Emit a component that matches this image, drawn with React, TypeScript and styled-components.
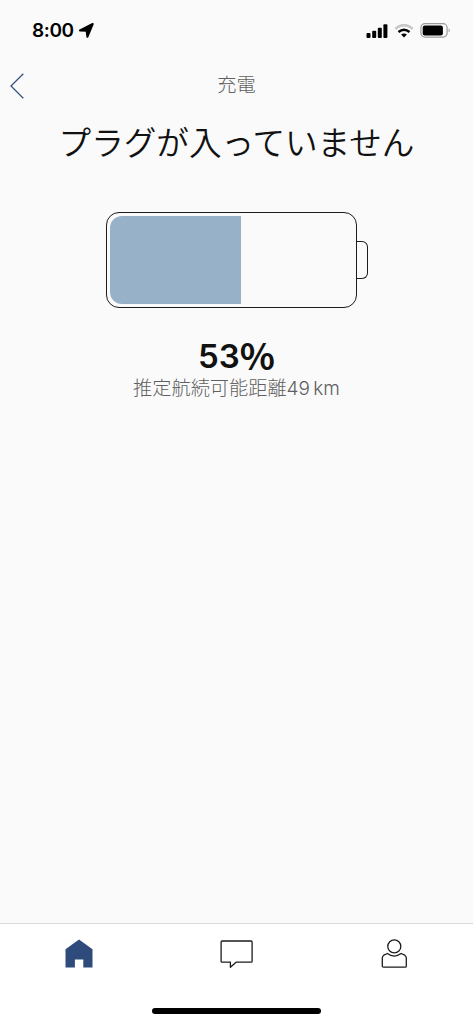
import React from 'react';
import styled, { createGlobalStyle } from 'styled-components';

const GlobalStyle = createGlobalStyle`
  * { box-sizing: border-box; }
  body { margin: 0; background: #fafafa; }
`;

const Screen = styled.div`
  display: flex;
  flex-direction: column;
  width: 100%;
  height: 1024px;
  background: #fafafa;
  color: #111;
  font-family: Inter, 'Noto Sans CJK JP', sans-serif;
  white-space: nowrap;
  overflow: hidden;
`;

const StatusBar = styled.header`
  display: flex;
  align-items: center;
  justify-content: space-between;
  height: 61px;
  padding: 0 22px 0 32px;
  color: #000;
`;

const StatusGroup = styled.div<{ $gap: number }>`
  display: flex;
  align-items: center;
  gap: ${({ $gap }) => $gap}px;
`;

const Time = styled.span`
  font-size: 19px;
  font-weight: 600;
  line-height: 24px;
  letter-spacing: -0.4px;
`;

const NavBar = styled.nav`
  display: grid;
  grid-template-columns: 60px 1fr 60px;
  align-items: center;
  height: 48px;
`;

const BackButton = styled.button`
  display: flex;
  padding: 1px 0 0 9px;
  border: 0;
  background: none;
`;

const NavTitle = styled.h1`
  margin: 0;
  font-size: 19.2px;
  font-weight: 300;
  line-height: 28px;
  color: #606060;
  text-align: center;
`;

const Content = styled.main`
  flex: 1;
  display: flex;
  flex-direction: column;
  align-items: center;
`;

const Headline = styled.h2`
  margin: 10px 0 0;
  font-size: 32.6px;
  font-weight: 350;
  line-height: 48px;
`;

const Battery = styled.div`
  display: flex;
  align-items: center;
  margin-top: 45px;
`;

const BatteryBody = styled.div`
  width: 251px;
  height: 96px;
  padding: 3px 3.5px;
  border: 1.3px solid #1c1c1c;
  border-radius: 13px;
`;

const BatteryFill = styled.div<{ $level: number }>`
  width: ${({ $level }) => $level}%;
  height: 100%;
  border-radius: 12px 0 0 12px;
  background: #97b1c8;
`;

const BatteryTip = styled.div`
  width: 11px;
  height: 38px;
  border: 1.3px solid #1c1c1c;
  border-left: 0;
  border-radius: 0 6px 6px 0;
`;

const Percent = styled.div`
  display: flex;
  align-items: center;
  height: 34px;
  margin-top: 31px;
  font-size: 33px;
  font-weight: 600;
  line-height: 34px;
`;

const PercentSign = styled.span`
  margin-top: -3px;
  font-family: 'Noto Sans CJK JP', sans-serif;
  font-size: 36.5px;
  font-weight: 700;
`;

const Range = styled.p`
  margin: 2px 0 0;
  font-size: 19.2px;
  font-weight: 300;
  line-height: 26px;
  color: #606060;
`;

const Distance = styled.span`
  font-size: 19px;
  word-spacing: -2px;
`;

const TabBar = styled.footer`
  display: flex;
  flex-direction: column;
  align-items: center;
  height: 101px;
  border-top: 1px solid #dadada;
  background: #fff;
`;

const Tabs = styled.div`
  display: grid;
  grid-template-columns: repeat(3, 1fr);
  width: 100%;
  height: 84px;
`;

const Tab = styled.button`
  display: flex;
  justify-content: center;
  padding: 14px 0 0;
  border: 0;
  background: none;
`;

const HomeIndicator = styled.div`
  width: 169px;
  height: 6px;
  border-radius: 3px;
  background: #000;
`;

export default function App() {
  return (
    <Screen>
      <GlobalStyle />
      <StatusBar>
        <StatusGroup $gap={5}>
          <Time>8:00</Time>
          <svg width="15" height="15" viewBox="0 0 15 15">
            <path d="M1 7.4 13.7 1 8.4 13.8 7.6 7.8Z" fill="#000" stroke="#000" strokeWidth="2" strokeLinejoin="round" />
          </svg>
        </StatusGroup>
        <StatusGroup $gap={6}>
          <svg width="22" height="14" viewBox="0 0 22 14">
            <rect x="0.5" y="9" width="4" height="5" rx="1" />
            <rect x="6.2" y="6.7" width="4" height="7.3" rx="1" />
            <rect x="11.8" y="3.7" width="4" height="10.3" rx="1" />
            <rect x="17.4" y="0.3" width="4" height="13.7" rx="1" />
          </svg>
          <svg width="20" height="14" viewBox="0 0 20 14" fill="none" strokeWidth="2.5">
            <path d="M1.3 4.7Q10-2.5 18.7 4.7" stroke="#c8c8c8" />
            <path d="M4.5 8Q10 3.4 15.5 8" stroke="#000" />
            <path d="M7.1 10.6Q10 8.4 12.9 10.6L10 13.6Z" fill="#000" />
          </svg>
          <svg width="31" height="15" viewBox="0 0 31 15">
            <rect x="0.9" y="0.7" width="26.2" height="13.4" rx="4" fill="none" stroke="#9b9b9b" strokeWidth="1.2" />
            <rect x="2.7" y="2.4" width="20.2" height="10" rx="2.2" />
            <path d="M28.6 5.2Q31 7.3 28.6 9.5Z" fill="#9b9b9b" />
          </svg>
        </StatusGroup>
      </StatusBar>
      <NavBar>
        <BackButton aria-label="戻る">
          <svg width="16" height="26" viewBox="0 0 16 26" fill="none" stroke="#34517f" strokeWidth="1.3">
            <path d="M14.3 .8 2 13 14.3 25.2" />
          </svg>
        </BackButton>
        <NavTitle>充電</NavTitle>
      </NavBar>
      <Content>
        <Headline>プラグが入っていません</Headline>
        <Battery>
          <BatteryBody>
            <BatteryFill $level={54} />
          </BatteryBody>
          <BatteryTip />
        </Battery>
        <Percent>53<PercentSign>%</PercentSign></Percent>
        <Range>推定航続可能距離<Distance>49 km</Distance></Range>
      </Content>
      <TabBar>
        <Tabs>
          <Tab aria-label="ホーム">
            <svg width="30" height="32" viewBox="0 0 30 32">
              <path d="M15 1.5 28.5 11.2V29.5H19.3V21.5H10.9V29.5H1.5V11.2Z" fill="#2f4b7c" />
            </svg>
          </Tab>
          <Tab aria-label="メッセージ">
            <svg width="34" height="32" viewBox="-.6 0 34 32" fill="none" stroke="#1c1c1c" strokeWidth="1.3" strokeLinejoin="round">
              <path d="M2.5 3H31.5Q32.5 3 32.5 4V23.2Q32.5 24.2 31.5 24.2H16.5L10.8 29.2V24.2H2.5Q1.5 24.2 1.5 23.2V4Q1.5 3 2.5 3Z" />
            </svg>
          </Tab>
          <Tab aria-label="プロフィール">
            <svg width="28" height="32" viewBox="-.3 0 28 32" fill="none" stroke="#1c1c1c" strokeWidth="1.3" strokeLinejoin="round">
              <circle cx="14" cy="8.4" r="6.5" />
              <path d="M7.1 15.5Q13.8 20.6 20.8 15.5L24.5 17.2Q26 18.2 26 20V28Q26 29.2 24.8 29.2H3.2Q2 29.2 2 28V20Q2 18.2 3.5 17.2Z" />
            </svg>
          </Tab>
        </Tabs>
        <HomeIndicator />
      </TabBar>
    </Screen>
  );
}
